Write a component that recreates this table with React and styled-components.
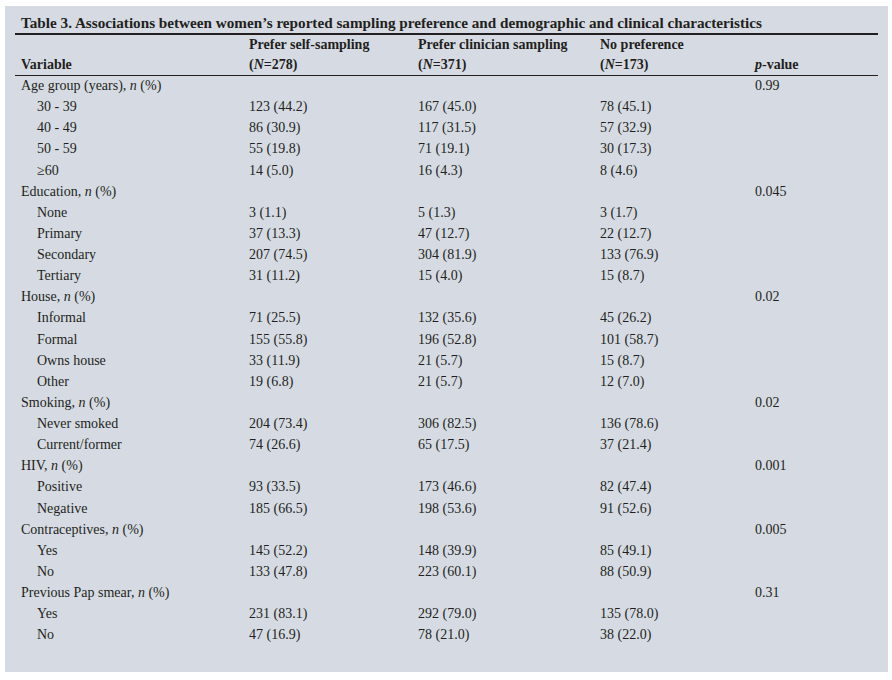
import React from 'react';
import styled, { createGlobalStyle } from 'styled-components';

const GlobalStyle = createGlobalStyle`
  body {
    margin: 0;
    background: #ffffff;
    font-family: "Liberation Serif", "Times New Roman", serif;
    color: #231f20;
  }
`;

const groups = [
  {
    label: 'Age group (years)',
    p: '0.99',
    rows: [
      ['30 - 39', '123 (44.2)', '167 (45.0)', '78 (45.1)'],
      ['40 - 49', '86 (30.9)', '117 (31.5)', '57 (32.9)'],
      ['50 - 59', '55 (19.8)', '71 (19.1)', '30 (17.3)'],
      ['\u226560', '14 (5.0)', '16 (4.3)', '8 (4.6)'],
    ],
  },
  {
    label: 'Education',
    p: '0.045',
    rows: [
      ['None', '3 (1.1)', '5 (1.3)', '3 (1.7)'],
      ['Primary', '37 (13.3)', '47 (12.7)', '22 (12.7)'],
      ['Secondary', '207 (74.5)', '304 (81.9)', '133 (76.9)'],
      ['Tertiary', '31 (11.2)', '15 (4.0)', '15 (8.7)'],
    ],
  },
  {
    label: 'House',
    p: '0.02',
    rows: [
      ['Informal', '71 (25.5)', '132 (35.6)', '45 (26.2)'],
      ['Formal', '155 (55.8)', '196 (52.8)', '101 (58.7)'],
      ['Owns house', '33 (11.9)', '21 (5.7)', '15 (8.7)'],
      ['Other', '19 (6.8)', '21 (5.7)', '12 (7.0)'],
    ],
  },
  {
    label: 'Smoking',
    p: '0.02',
    rows: [
      ['Never smoked', '204 (73.4)', '306 (82.5)', '136 (78.6)'],
      ['Current/former', '74 (26.6)', '65 (17.5)', '37 (21.4)'],
    ],
  },
  {
    label: 'HIV',
    p: '0.001',
    rows: [
      ['Positive', '93 (33.5)', '173 (46.6)', '82 (47.4)'],
      ['Negative', '185 (66.5)', '198 (53.6)', '91 (52.6)'],
    ],
  },
  {
    label: 'Contraceptives',
    p: '0.005',
    rows: [
      ['Yes', '145 (52.2)', '148 (39.9)', '85 (49.1)'],
      ['No', '133 (47.8)', '223 (60.1)', '88 (50.9)'],
    ],
  },
  {
    label: 'Previous Pap smear',
    p: '0.31',
    rows: [
      ['Yes', '231 (83.1)', '292 (79.0)', '135 (78.0)'],
      ['No', '47 (16.9)', '78 (21.0)', '38 (22.0)'],
    ],
  },
];

function App() {
  return (
    <Page>
      <GlobalStyle />
      <Panel>
        <Title>
          Table 3. Associations between women’s reported sampling preference and demographic and clinical characteristics
        </Title>
        <Header>
          <HeadCell />
          <HeadCell>Prefer self-sampling</HeadCell>
          <HeadCell>Prefer clinician sampling</HeadCell>
          <HeadCell>No preference</HeadCell>
          <HeadCell />
          <HeadCell>Variable</HeadCell>
          <HeadCell>(<i>N</i>=278)</HeadCell>
          <HeadCell>(<i>N</i>=371)</HeadCell>
          <HeadCell>(<i>N</i>=173)</HeadCell>
          <HeadCell><i>p</i>-value</HeadCell>
        </Header>
        <Body>
          {groups.map((g) => (
            <React.Fragment key={g.label}>
              <Row>
                <Cell>
                  {g.label}, <i>n</i> (%)
                </Cell>
                <Cell />
                <Cell />
                <Cell />
                <Cell>{g.p}</Cell>
              </Row>
              {g.rows.map((r, i) => (
                <Row key={g.label + i}>
                  <Cell $indent>{r[0]}</Cell>
                  <Cell>{r[1]}</Cell>
                  <Cell>{r[2]}</Cell>
                  <Cell>{r[3]}</Cell>
                  <Cell />
                </Row>
              ))}
            </React.Fragment>
          ))}
        </Body>
      </Panel>
    </Page>
  );
}

const Page = styled.div`
  padding: 6px 4px 8px 5px;
`;

const Panel = styled.div`
  width: 883px;
  height: 666px;
  box-sizing: border-box;
  background: #d6dbe3;
  padding: 6px 10px 0 10px;
`;

const Title = styled.div`
  font-size: 15.2px;
  font-weight: bold;
  line-height: 20px;
  padding: 1px 0 0 6px;
  border-bottom: 2px solid #231f20;
  white-space: nowrap;
`;

const cols = '228px 169px 182px 155px 1fr';

const Header = styled.div`
  display: grid;
  grid-template-columns: ${cols};
  grid-auto-rows: 20px;
  border-bottom: 1px solid #231f20;
  font-size: 14px;
  font-weight: bold;
  line-height: 20px;
`;

const HeadCell = styled.div`
  padding-left: 6px;
  white-space: nowrap;
`;

const Body = styled.div`
  display: flex;
  flex-direction: column;
  margin-top: -1px;
`;

const Row = styled.div`
  display: grid;
  grid-template-columns: ${cols};
  height: 21.125px;
  font-size: 14px;
  line-height: 21.125px;
`;

const Cell = styled.div`
  padding-left: ${(p) => (p.$indent ? '22px' : '6px')};
  white-space: nowrap;
`;

export default App;
